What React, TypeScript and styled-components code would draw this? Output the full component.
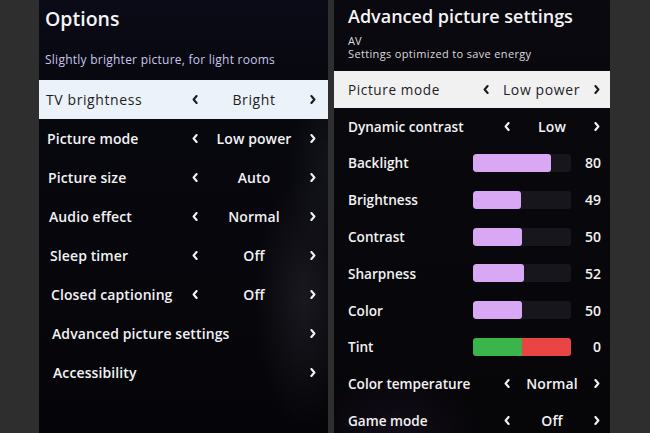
import React from 'react';
import styled, { createGlobalStyle } from 'styled-components';

type OptionRow = {
  label: string;
  value?: string;
  selected?: boolean;
};

type AdvancedRow =
  | { kind: 'select'; label: string; value: string; selected?: boolean }
  | { kind: 'slider'; label: string; value: number }
  | { kind: 'tint'; label: string; value: number };

const optionRows: OptionRow[] = [
  { label: 'TV brightness', value: 'Bright', selected: true },
  { label: 'Picture mode', value: 'Low power' },
  { label: 'Picture size', value: 'Auto' },
  { label: 'Audio effect', value: 'Normal' },
  { label: 'Sleep timer', value: 'Off' },
  { label: 'Closed captioning', value: 'Off' },
  { label: 'Advanced picture settings' },
  { label: 'Accessibility' },
];

const advancedRows: AdvancedRow[] = [
  { kind: 'select', label: 'Picture mode', value: 'Low power', selected: true },
  { kind: 'select', label: 'Dynamic contrast', value: 'Low' },
  { kind: 'slider', label: 'Backlight', value: 80 },
  { kind: 'slider', label: 'Brightness', value: 49 },
  { kind: 'slider', label: 'Contrast', value: 50 },
  { kind: 'slider', label: 'Sharpness', value: 52 },
  { kind: 'slider', label: 'Color', value: 50 },
  { kind: 'tint', label: 'Tint', value: 0 },
  { kind: 'select', label: 'Color temperature', value: 'Normal' },
  { kind: 'select', label: 'Game mode', value: 'Off' },
];

const GlobalStyle = createGlobalStyle`
  html, body {
    margin: 0;
    padding: 0;
    background: #2e2e2e;
  }
  body {
    font-family: 'Open Sans', 'Noto Sans', sans-serif;
    -webkit-font-smoothing: antialiased;
  }
`;

const Chevron: React.FC<{ dir: 'left' | 'right' }> = ({ dir }) => (
  <ChevronSvg width='6' height='9' viewBox='0 0 6 9'>
    <path
      d={dir === 'left' ? 'M4.6 1 L1.6 4.5 L4.6 8' : 'M1.4 1 L4.4 4.5 L1.4 8'}
      fill='none'
      stroke='currentColor'
      strokeWidth='2.1'
      strokeLinecap='round'
      strokeLinejoin='round'
    />
  </ChevronSvg>
);

const App: React.FC = () => {
  return (
    <>
      <GlobalStyle />
      <Page>
        <OptionsPanel>
          <OptionsHeader>
            <Title>Options</Title>
            <Hint>Slightly brighter picture, for light rooms</Hint>
          </OptionsHeader>
          {optionRows.map((row, i) => (
            <OptionItem key={row.label} $selected={row.selected} $indent={i}>
              <Label $selected={row.selected}>{row.label}</Label>
              {row.value ? (
                <>
                  <Chevron dir='left' />
                  <OptionValue $selected={row.selected}>{row.value}</OptionValue>
                </>
              ) : (
                <Spacer />
              )}
              <Chevron dir='right' />
            </OptionItem>
          ))}
        </OptionsPanel>

        <AdvancedPanel>
          <AdvancedHeader>
            <AdvancedTitle>Advanced picture settings</AdvancedTitle>
            <SourceName>AV</SourceName>
            <SourceHint>Settings optimized to save energy</SourceHint>
          </AdvancedHeader>
          {advancedRows.map((row) => (
            <AdvancedItem
              key={row.label}
              $selected={row.kind === 'select' && row.selected}
            >
              <SmallLabel $selected={row.kind === 'select' && row.selected}>
                {row.label}
              </SmallLabel>
              {row.kind === 'select' ? (
                <Selector>
                  <Chevron dir='left' />
                  <SelectValue $selected={row.selected}>{row.value}</SelectValue>
                  <Chevron dir='right' />
                </Selector>
              ) : (
                <Slider>
                  {row.kind === 'tint' ? (
                    <TintTrack>
                      <TintGreen />
                      <TintRed />
                    </TintTrack>
                  ) : (
                    <Track>
                      <Fill style={{ width: `${row.value}%` }} />
                    </Track>
                  )}
                  <Amount>{row.value}</Amount>
                </Slider>
              )}
            </AdvancedItem>
          ))}
        </AdvancedPanel>
      </Page>
    </>
  );
};

const Page = styled.main`
  display: flex;
  gap: 6px;
  height: 433px;
  padding-left: 39px;
  background: #2e2e2e;
  overflow: hidden;
`;

const OptionsPanel = styled.section`
  width: 289px;
  flex-shrink: 0;
  display: flex;
  flex-direction: column;
  overflow: hidden;
  background:
    radial-gradient(ellipse 70px 180px at 265px 300px, rgba(90, 90, 100, 0.22), transparent 70%),
    radial-gradient(ellipse 60px 120px at 290px 170px, rgba(80, 80, 95, 0.18), transparent 70%),
    linear-gradient(180deg, #0b0b17 0%, #07070e 25%, #050509 100%);
`;

const OptionsHeader = styled.header`
  height: 80px;
  flex-shrink: 0;
  box-sizing: border-box;
  padding: 6px 0 0 6px;
  display: flex;
  flex-direction: column;
`;

const Title = styled.h1`
  margin: 0;
  font-size: 19.5px;
  line-height: 26px;
  font-weight: 600;
  color: #f4f4f8;
`;

const Hint = styled.p`
  margin: 20px 0 0;
  font-size: 12px;
  line-height: 16px;
  color: #c9c6ea;
  letter-spacing: 0.25px;
`;

const OptionItem = styled.div<{ $selected?: boolean; $indent: number }>`
  height: 39px;
  flex-shrink: 0;
  box-sizing: border-box;
  display: grid;
  grid-template-columns: minmax(0, 1fr) 6px 112px 6px;
  align-items: center;
  padding: 0 12px 0 ${(p) => 7 + p.$indent}px;
  background: ${(p) => (p.$selected ? '#ebf2f9' : 'transparent')};
  color: ${(p) => (p.$selected ? '#1d1d22' : '#f2f2f4')};
`;

const Label = styled.span<{ $selected?: boolean }>`
  font-size: 14px;
  font-weight: ${(p) => (p.$selected ? 400 : 600)};
  letter-spacing: ${(p) => (p.$selected ? '0.6px' : '0.1px')};
  white-space: nowrap;
`;

const SmallLabel = styled(Label)`
  font-size: 13.6px;
  letter-spacing: ${(p) => (p.$selected ? '0.6px' : '0')};
`;

const OptionValue = styled.span<{ $selected?: boolean }>`
  text-align: center;
  font-size: 14px;
  font-weight: ${(p) => (p.$selected ? 400 : 600)};
  letter-spacing: ${(p) => (p.$selected ? '0.6px' : '0.1px')};
`;

const Spacer = styled.span`
  grid-column: span 2;
`;

const ChevronSvg = styled.svg`
  display: block;
`;

const AdvancedPanel = styled.section`
  width: 276px;
  flex-shrink: 0;
  display: flex;
  flex-direction: column;
  overflow: hidden;
  background:
    radial-gradient(ellipse 120px 90px at 60px 430px, rgba(40, 25, 55, 0.35), transparent 70%),
    linear-gradient(180deg, #0a090f 0%, #060508 100%);
`;

const AdvancedHeader = styled.header`
  height: 71px;
  flex-shrink: 0;
  box-sizing: border-box;
  padding: 4px 0 0 14px;
  display: flex;
  flex-direction: column;
`;

const AdvancedTitle = styled.h2`
  margin: 0;
  font-size: 18px;
  line-height: 25px;
  font-weight: 600;
  color: #f4f4f6;
`;

const SourceName = styled.div`
  margin-top: 5px;
  font-size: 11px;
  line-height: 13px;
  color: #d9d9dd;
`;

const SourceHint = styled.div`
  font-size: 11px;
  line-height: 13px;
  letter-spacing: 0.35px;
  color: #d9d9dd;
`;

const AdvancedItem = styled.div<{ $selected?: boolean }>`
  height: 36.8px;
  flex-shrink: 0;
  box-sizing: border-box;
  display: flex;
  align-items: center;
  justify-content: space-between;
  padding: 0 10px 0 14px;
  background: ${(p) => (p.$selected ? '#f1f1f2' : 'transparent')};
  color: ${(p) => (p.$selected ? '#1d1d22' : '#f2f2f4')};
`;

const Selector = styled.div`
  display: flex;
  align-items: center;
`;

const SelectValue = styled.span<{ $selected?: boolean }>`
  min-width: 84px;
  padding: 0 14px;
  box-sizing: border-box;
  text-align: center;
  font-size: 14px;
  font-weight: ${(p) => (p.$selected ? 400 : 600)};
  letter-spacing: ${(p) => (p.$selected ? '0.6px' : '0.1px')};
`;

const Slider = styled.div`
  display: flex;
  align-items: center;
  margin-right: -1px;
`;

const Track = styled.div`
  width: 98px;
  height: 18px;
  border-radius: 3px;
  background: #17161d;
  overflow: hidden;
`;

const Fill = styled.div`
  height: 100%;
  border-radius: 3px;
  background: #d9a8f5;
`;

const TintTrack = styled.div`
  width: 98px;
  height: 18px;
  border-radius: 3px;
  overflow: hidden;
  display: flex;
`;

const TintGreen = styled.div`
  flex: 1;
  background: #3bb44b;
`;

const TintRed = styled.div`
  flex: 1;
  background: #e94545;
`;

const Amount = styled.span`
  width: 30px;
  text-align: right;
  font-size: 14px;
  font-weight: 600;
`;

export default App;
